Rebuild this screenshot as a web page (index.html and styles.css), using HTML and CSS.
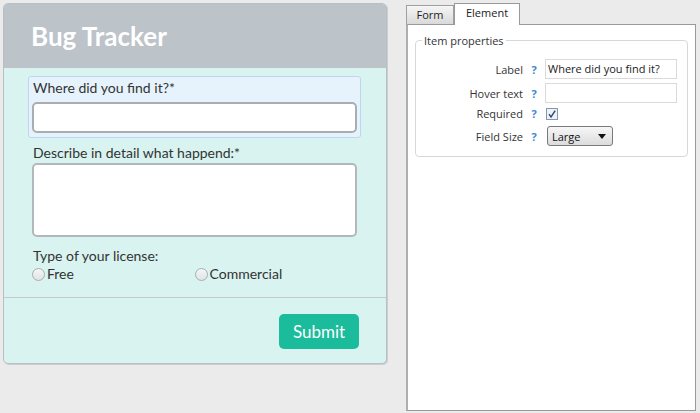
FILE: index.html
```html
<!DOCTYPE html>
<html>
<head>
<meta charset="utf-8">
<link rel="stylesheet" href="styles.css">
</head>
<body>
<div class="page">
  <div class="left">
    <form class="card">
      <div class="card-head"><h1>Bug Tracker</h1></div>
      <div class="card-body">
        <div class="field active">
          <div class="lbl">Where did you find it?*</div>
          <div class="input"></div>
        </div>
        <div class="field f2">
          <div class="lbl">Describe in detail what happend:*</div>
          <div class="textarea"></div>
        </div>
        <div class="field f3">
          <div class="lbl">Type of your license:</div>
          <div class="radios">
            <div class="radio"><span class="circle"></span>Free</div>
            <div class="radio"><span class="circle"></span>Commercial</div>
          </div>
        </div>
      </div>
      <div class="card-foot"><div class="btn">Submit</div></div>
    </form>
  </div>
  <div class="right">
    <div class="tabs">
      <div class="tab">Form</div>
      <div class="tab active">Element</div>
    </div>
    <div class="panel">
      <fieldset class="props">
        <legend>Item properties</legend>
        <div class="row r1">
          <span class="plabel">Label</span><span class="q">?</span>
          <div class="pinput">Where did you find it?</div>
        </div>
        <div class="row r2">
          <span class="plabel">Hover text</span><span class="q">?</span>
          <div class="pinput"></div>
        </div>
        <div class="row r3">
          <span class="plabel">Required</span><span class="q">?</span>
          <div class="ctl"><svg class="check" width="12" height="12" viewBox="0 0 12 12"><rect x="0.5" y="0.5" width="11" height="11" fill="#eef2f7" stroke="#8797ab"/><path d="M3 6.2 L5 9 L9.2 2.6" fill="none" stroke="#2c4a78" stroke-width="1.4"/></svg></div>
        </div>
        <div class="row r4">
          <span class="plabel">Field Size</span><span class="q">?</span>
          <div class="ctl"><div class="select"><span>Large</span><svg width="8" height="5" viewBox="0 0 8 5"><path d="M0 0 H8 L4 5 Z" fill="#111"/></svg></div></div>
        </div>
      </fieldset>
    </div>
  </div>
</div>
</body>
</html>
```

FILE: styles.css
```css
* { box-sizing: border-box; }
html, body { margin: 0; padding: 0; }
body { background: #ebebeb; width: 700px; height: 413px; overflow: hidden; }
.page { display: flex; }
.left { width: 387px; padding: 3px 0 0 3px; }
.card {
  margin: 0;
  width: 384px;
  border: 1px solid #b9bfc3;
  border-radius: 5px;
  box-shadow: 1px 1px 0 #c9ced1;
  background: #d8f3f0;
  font-family: Lato, "Open Sans", sans-serif;
  color: #333;
  overflow: hidden;
}
.card-head { background: #bcc3c9; height: 64px; padding: 17px 0 0 27px; }
.card-head h1 { margin: 0; font-size: 26px; font-weight: 700; color: #fff; line-height: 30px; }
.card-body { padding: 8px 25px 9px 24px; }
.field { border: 1px solid transparent; border-radius: 3px; padding: 2px 3px 4px 3px; }
.field.active { background: #e6f3fd; border-color: #bcd7ef; }
.f2 { margin-top: 3px; }
.f3 { margin-top: 2px; }
.lbl { font-size: 14px; line-height: 18px; padding-left: 1px; }
.input { margin-top: 5px; height: 31px; background: #fff; border: 2px solid #a9aeb2; border-radius: 5px; }
.textarea { margin-top: 1px; height: 74px; background: #fff; border: 2px solid #b2b8bb; border-radius: 5px; }
.radios { display: grid; grid-template-columns: 1fr 1fr; }
.radio { display: flex; align-items: center; font-size: 14px; line-height: 18px; }
.circle { width: 13px; height: 13px; border-radius: 50%; border: 1px solid #a7aeb0; background: linear-gradient(#f4f6f6, #dfe4e4); margin: 0 2px 0 0; }
.card-foot { border-top: 1px solid #c4cbce; padding: 16px 27px 14px 0; display: flex; justify-content: flex-end; }
.btn { width: 80px; height: 35px; background: #1abc9c; border-radius: 5px; color: #fff; font-size: 17px; line-height: 35px; text-align: center; }

.right { margin-left: 19px; width: 290px; padding-top: 3px; font-family: "Open Sans", "DejaVu Sans", sans-serif; font-size: 11px; color: #333; }
.tabs { display: flex; align-items: flex-end; height: 21px; position: relative; z-index: 1; }
.tab { width: 48px; height: 19px; border: 1px solid #a0a0a0; border-bottom: none; background: linear-gradient(#f6f6f6, #d9d9d9); text-align: center; line-height: 18px; color: #222; }
.tab.active { width: 66px; height: 22px; background: #fff; margin-bottom: -1px; line-height: 18px; border-color: #999; }
.panel { height: 387px; background: #fff; border: 1px solid #9a9a9a; border-left: 2px solid #aeaeae; padding: 9px 7px 0 7px; }
.props { margin: 0; border: 1px solid #d8d8d8; border-radius: 4px; padding: 12px 8px 10px 6px; min-width: 0; }
.props legend { padding: 0 2px; line-height: 13px; color: #333; }
.row { display: grid; grid-template-columns: 101px 22px 132px; align-items: center; }
.r1 { height: 20px; }
.r2 { height: 20px; margin-top: 4px; }
.r3 { height: 15px; margin-top: 3px; }
.r4 { height: 20px; margin-top: 5px; }
.plabel { text-align: right; }
.q { text-align: center; color: #3a88d4; font-weight: 700; }
.pinput { height: 20px; border: 1px solid #dadada; background: #fff; padding-left: 2px; line-height: 18px; color: #222; white-space: nowrap; overflow: hidden; }
.ctl { display: flex; align-items: center; }
.check { margin-left: 1px; display: block; }
.select { margin-left: 2px; width: 66px; height: 20px; border: 1px solid #7a7a7a; border-radius: 3px; background: linear-gradient(#f7f7f7, #dcdcdc); display: flex; align-items: center; justify-content: space-between; padding: 0 6px 0 4px; color: #111; }
.select svg { display: block; }
```
